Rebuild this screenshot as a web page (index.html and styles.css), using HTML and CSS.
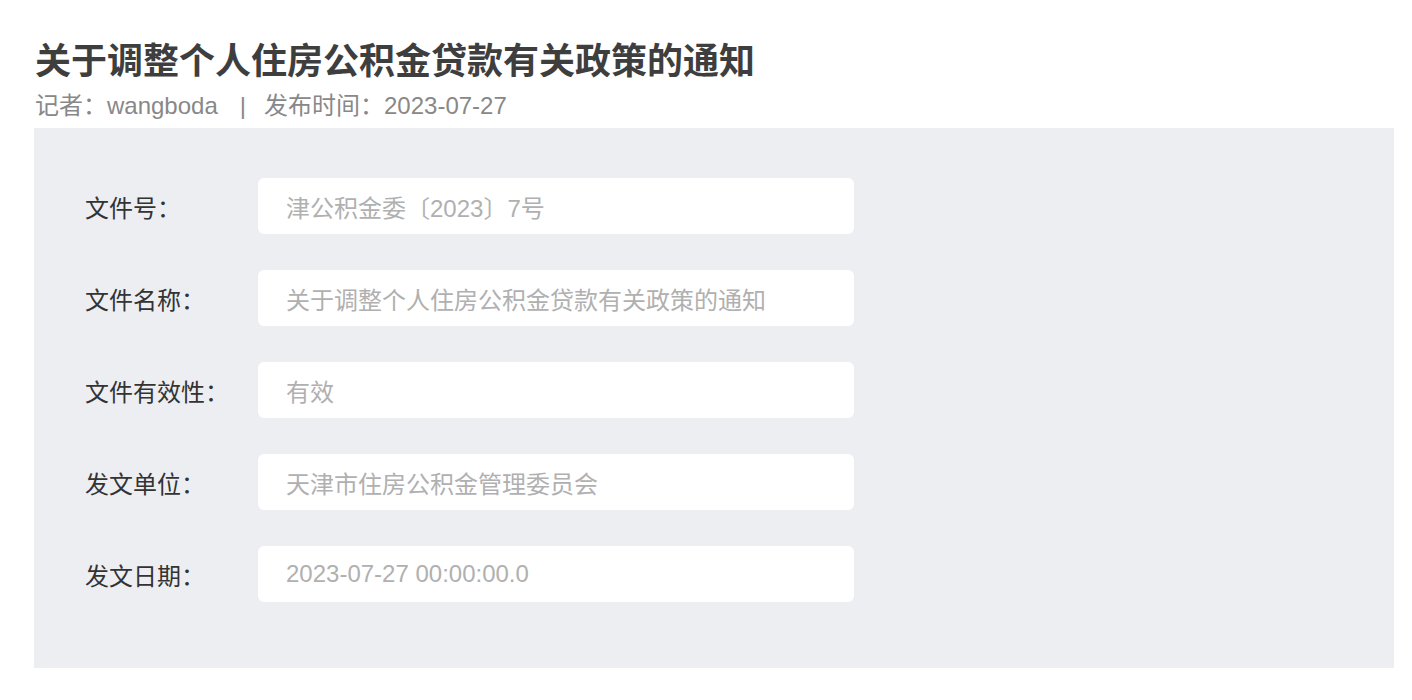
FILE: index.html
```html
<!DOCTYPE html>
<html lang="zh-CN">
<head>
<meta charset="utf-8">
<link rel="stylesheet" href="styles.css">
</head>
<body>
<div class="page">
  <h1 class="title">关于调整个人住房公积金贷款有关政策的通知</h1>
  <div class="meta"><span>记者：wangboda</span><span class="sep">|</span><span>发布时间：2023-07-27</span></div>
  <div class="panel">
    <div class="row"><div class="label">文件号：</div><div class="field">津公积金委〔2023〕7号</div></div>
    <div class="row"><div class="label">文件名称：</div><div class="field">关于调整个人住房公积金贷款有关政策的通知</div></div>
    <div class="row"><div class="label">文件有效性：</div><div class="field">有效</div></div>
    <div class="row"><div class="label">发文单位：</div><div class="field">天津市住房公积金管理委员会</div></div>
    <div class="row"><div class="label">发文日期：</div><div class="field">2023-07-27 00:00:00.0</div></div>
  </div>
</div>
</body>
</html>
```
FILE: styles.css
```css
html, body {
  margin: 0;
  padding: 0;
  background: #ffffff;
}
body {
  font-family: "Liberation Sans", "Noto Sans CJK SC", sans-serif;
}
.page {
  padding: 40px 18px 0 34px;
}
.title {
  margin: 0;
  font-size: 36px;
  line-height: 44px;
  font-weight: 700;
  color: #3e3e3e;
  padding-left: 1px;
}
.meta {
  margin-top: 7px;
  font-size: 24px;
  line-height: 30px;
  color: #888888;
  padding-left: 1px;
  display: flex;
}
.meta .sep {
  margin: 0 18px 0 22px;
}
.panel {
  margin-top: 7px;
  background: #edeef2;
  height: 540px;
  box-sizing: border-box;
  padding: 50px 0 0 51px;
  display: flex;
  flex-direction: column;
  gap: 36px;
}
.row {
  display: flex;
  align-items: center;
}
.label {
  width: 173px;
  font-size: 24px;
  color: #333333;
}
.field {
  width: 596px;
  height: 56px;
  box-sizing: border-box;
  background: #ffffff;
  border-radius: 6px;
  padding-left: 28px;
  display: flex;
  align-items: center;
  font-size: 24px;
  color: #b0b0b0;
}
```
